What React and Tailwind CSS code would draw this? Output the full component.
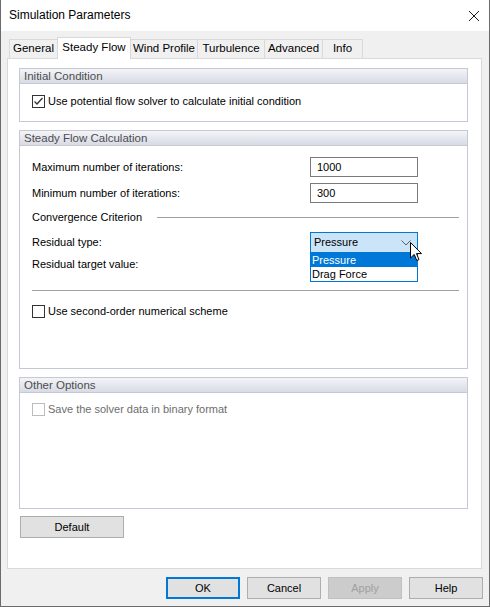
import React from "react";

const font = { fontFamily: '"Liberation Sans", Arial, sans-serif' };

const tabs = [
  { label: "General", w: "w-[49px]" },
  { label: "Steady Flow", w: "w-[74px]", active: true },
  { label: "Wind Profile", w: "w-[68px]" },
  { label: "Turbulence", w: "w-[68px]" },
  { label: "Advanced", w: "w-[59px]" },
  { label: "Info", w: "w-[41px]" },
];

const Check = ({ checked, disabled }) => (
  <div
    className={`w-[13px] h-[13px] border bg-white flex items-center justify-center shrink-0 ${
      disabled ? "border-[#bcbcbc]" : "border-[#333333]"
    }`}
  >
    {checked && (
      <svg width="11" height="11" viewBox="0 0 11 11">
        <polyline points="1.5,5.5 4,8 9.5,2" fill="none" stroke="#333" strokeWidth="1.3" />
      </svg>
    )}
  </div>
);

const Group = ({ title, h, children }) => (
  <div className={`w-[449px] ml-[11px] ${h} border border-[#c5c9d6] flex flex-col`}>
    <div className="h-[15px] border-b border-[#c5c9d6] bg-gradient-to-b from-[#f4f4f8] to-[#d8dbe5] pl-[4px] text-[11.5px] leading-[14px] text-[#4d4d4d]">
      {title}
    </div>
    {children}
  </div>
);

const Field = ({ label, value, mt }) => (
  <div className={`flex items-center h-[20px] ${mt}`}>
    <div className="w-[278px]">{label}</div>
    <div className="w-[108px] h-[20px] border border-[#7a7a7a] bg-white pl-[6px] leading-[18px]">
      {value}
    </div>
  </div>
);

const Button = ({ children, primary, disabled, className = "" }) => (
  <div
    className={`h-[22px] flex items-center justify-center text-[11px] ${className} ${
      primary
        ? "border-2 border-[#0078d7] bg-[#e1e1e1]"
        : disabled
        ? "border border-[#bfbfbf] bg-[#cccccc] text-[#a0a0a0]"
        : "border border-[#adadad] bg-[#e1e1e1]"
    }`}
  >
    {children}
  </div>
);

export default function App() {
  return (
    <div
      style={font}
      className="w-[490px] h-[607px] border-x border-b border-[#6b6b6b] flex flex-col text-[11px] text-black"
    >
      <div className="h-[31px] bg-white flex items-center justify-between pl-[8px] pr-[8px] shrink-0">
        <span className="text-[12px] pb-[1px]">Simulation Parameters</span>
        <svg width="12" height="12" viewBox="0 0 12 12" className="mr-[1px]">
          <path d="M1 1L11 11M11 1L1 11" stroke="#1a1a1a" strokeWidth="1" />
        </svg>
      </div>

      <div className="flex-1 bg-[#f0f0f0] flex flex-col">
        <div className="flex items-end h-[21px] mt-[6px] ml-[8px]">
          {tabs.map((t, i) =>
            t.active ? (
              <div
                key={t.label}
                className={`${t.w} h-[22px] -mb-px -ml-px relative z-10 bg-white border-x border-t border-[#d9d9d9] flex items-center justify-center text-[11.5px] pb-[2px]`}
              >
                {t.label}
              </div>
            ) : (
              <div
                key={t.label}
                className={`${t.w} h-[19px] ${i > 0 ? "-ml-px" : ""} bg-[#f0f0f0] border-x border-t border-[#d9d9d9] flex items-center justify-center text-[11.5px]`}
              >
                {t.label}
              </div>
            )
          )}
        </div>

        <div className="ml-[6px] w-[475px] h-[511px] bg-white border border-[#d9d9d9] flex flex-col pt-[9px]">
          <Group title="Initial Condition" h="h-[54px]">
            <div className="flex items-center gap-[3px] ml-[12px] mt-[9px]">
              <Check checked />
              <span>Use potential flow solver to calculate initial condition</span>
            </div>
          </Group>

          <div className="mt-[8px]">
            <Group title="Steady Flow Calculation" h="h-[239px]">
              <div className="flex flex-col pl-[12px] pr-[8px]">
                <Field label="Maximum number of iterations:" value="1000" mt="mt-[11px]" />
                <Field label="Minimum number of iterations:" value="300" mt="mt-[6px]" />
                <div className="flex items-center h-[19px] mt-[5px]">
                  <span>Convergence Criterion</span>
                  <div className="flex-1 h-px bg-[#a0a0a0] ml-[15px]" />
                </div>
                <div className="flex items-center h-[21px] mt-[5px]">
                  <div className="w-[278px]">Residual type:</div>
                  <div className="relative w-[108px] h-[21px] border border-[#0078d7] bg-[#cce4f7] flex items-center pl-[3px]">
                    <span>Pressure</span>
                    <svg width="10" height="6" viewBox="0 0 10 6" className="absolute right-[6px] top-[7px]">
                      <polyline points="0.5,0.5 5,5 9.5,0.5" fill="none" stroke="#606060" strokeWidth="1" />
                    </svg>
                    <div className="absolute left-[-1px] top-[19px] w-[108px] h-[30px] border border-[#0078d7] bg-white z-20 flex flex-col">
                      <div className="h-[14px] bg-[#0078d7] text-white pl-[1px] leading-[14px]">Pressure</div>
                      <div className="h-[14px] pl-[1px] leading-[14px]">Drag Force</div>
                    </div>
                    <svg
                      width="13"
                      height="20"
                      viewBox="0 0 13 20"
                      className="absolute left-[99px] top-[9px] z-30"
                    >
                      <path
                        d="M0.5 0.5 L0.5 16 L4.2 12.4 L6.8 18.5 L9 17.6 L6.5 11.6 L11.5 11.6 Z"
                        fill="white"
                        stroke="black"
                        strokeWidth="1"
                        strokeLinejoin="miter"
                      />
                    </svg>
                  </div>
                </div>
                <div className="flex items-center h-[21px] mt-[1px]">Residual target value:</div>
                <div className="h-px bg-[#a0a0a0] mt-[15px]" />
                <div className="flex items-center gap-[3px] mt-[12px]">
                  <Check />
                  <span>Use second-order numerical scheme</span>
                </div>
              </div>
            </Group>
          </div>

          <div className="mt-[8px]">
            <Group title="Other Options" h="h-[132px]">
              <div className="flex items-center gap-[3px] ml-[12px] mt-[8px] text-[#6d6d6d]">
                <Check disabled />
                <span>Save the solver data in binary format</span>
              </div>
            </Group>
          </div>

          <Button className="w-[104px] ml-[12px] mt-[7px]">Default</Button>
        </div>

        <div className="flex justify-end gap-[7px] pr-[6px] mt-[8px]">
          <Button primary className="w-[74px]">OK</Button>
          <Button className="w-[74px]">Cancel</Button>
          <Button disabled className="w-[74px]">Apply</Button>
          <Button className="w-[74px]">Help</Button>
        </div>
      </div>
    </div>
  );
}
